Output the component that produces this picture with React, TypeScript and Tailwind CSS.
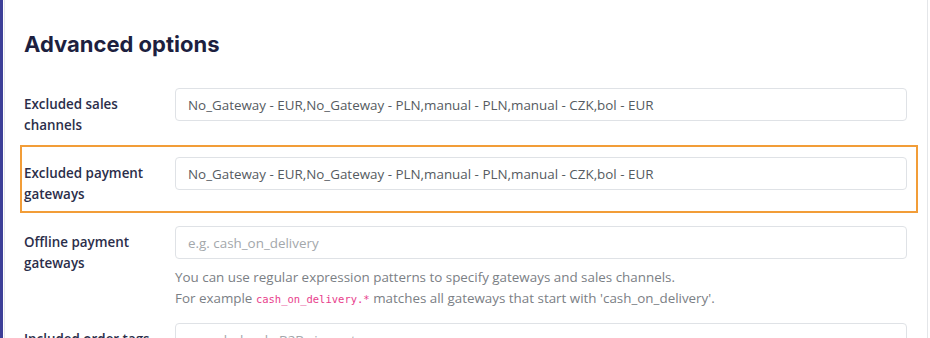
import React from "react";

type Row = {
  label: string;
  value?: string;
  placeholder?: string;
  highlight?: boolean;
  help?: boolean;
};

const GATEWAYS = "No_Gateway - EUR,No_Gateway - PLN,manual - PLN,manual - CZK,bol - EUR";

const ROWS: Row[] = [
  { label: "Excluded sales channels", value: GATEWAYS },
  { label: "Excluded payment gateways", value: GATEWAYS, highlight: true },
  { label: "Offline payment gateways", placeholder: "e.g. cash_on_delivery", help: true },
  { label: "Included order tags", placeholder: "e.g. wholesale,B2B,vip-customer" },
];

function FormRow({ row }: { row: Row }) {
  return (
    <div className={"relative flex w-[883px] " + (row.help ? "mb-[13px]" : "mb-[21px]")}>
      {/* highlight overlay */}
      {row.highlight && (
        <span className="pointer-events-none absolute -top-[12px] -left-[4px] -right-[11px] -bottom-[8px] border-2 border-[#f29d38]" />
      )}
      <label className="w-[151px] shrink-0 pt-[6px] pr-4 text-[13.4px] font-semibold leading-[21px] text-[#2b2e4a]">
        {row.label}
      </label>
      <div className="w-[732px]">
        <input
          readOnly
          value={row.value ?? ""}
          placeholder={row.placeholder}
          className="block h-[33px] w-full rounded-[4px] border border-[#dfe2e6] bg-white px-[12px] text-[13.4px] text-[#555b61] outline-none placeholder:text-[#a3a7ab]"
        />
        {row.help && (
          <div className="mt-[8px] text-[13.4px] leading-[21px] text-[#7b8085]">
            <p>You can use regular expression patterns to specify gateways and sales channels.</p>
            <p>
              For example{" "}
              <code className="font-['DejaVu_Sans_Mono',monospace] text-[10.5px] text-[#e83e8c]">cash_on_delivery.*</code>{" "}
              matches all gateways that start with 'cash_on_delivery'.
            </p>
          </div>
        )}
      </div>
    </div>
  );
}

export default function App() {
  return (
    <div className="flex h-[338px] w-[930px] overflow-hidden bg-white font-['Open_Sans',sans-serif]">
      <div className="w-[3px] shrink-0 bg-[#3d3f98]" />
      <div className="ml-px w-[924px] shrink-0 border-x border-[#e4e6e9]">
        <div className="pl-[19px] pt-[29px]">
          <h2 className="mb-[29px] font-['Inter',sans-serif] text-[22px] font-bold leading-[30px] text-[#1d1f3f]">
            Advanced options
          </h2>
          {ROWS.map((row) => (
            <FormRow key={row.label} row={row} />
          ))}
        </div>
      </div>
    </div>
  );
}
